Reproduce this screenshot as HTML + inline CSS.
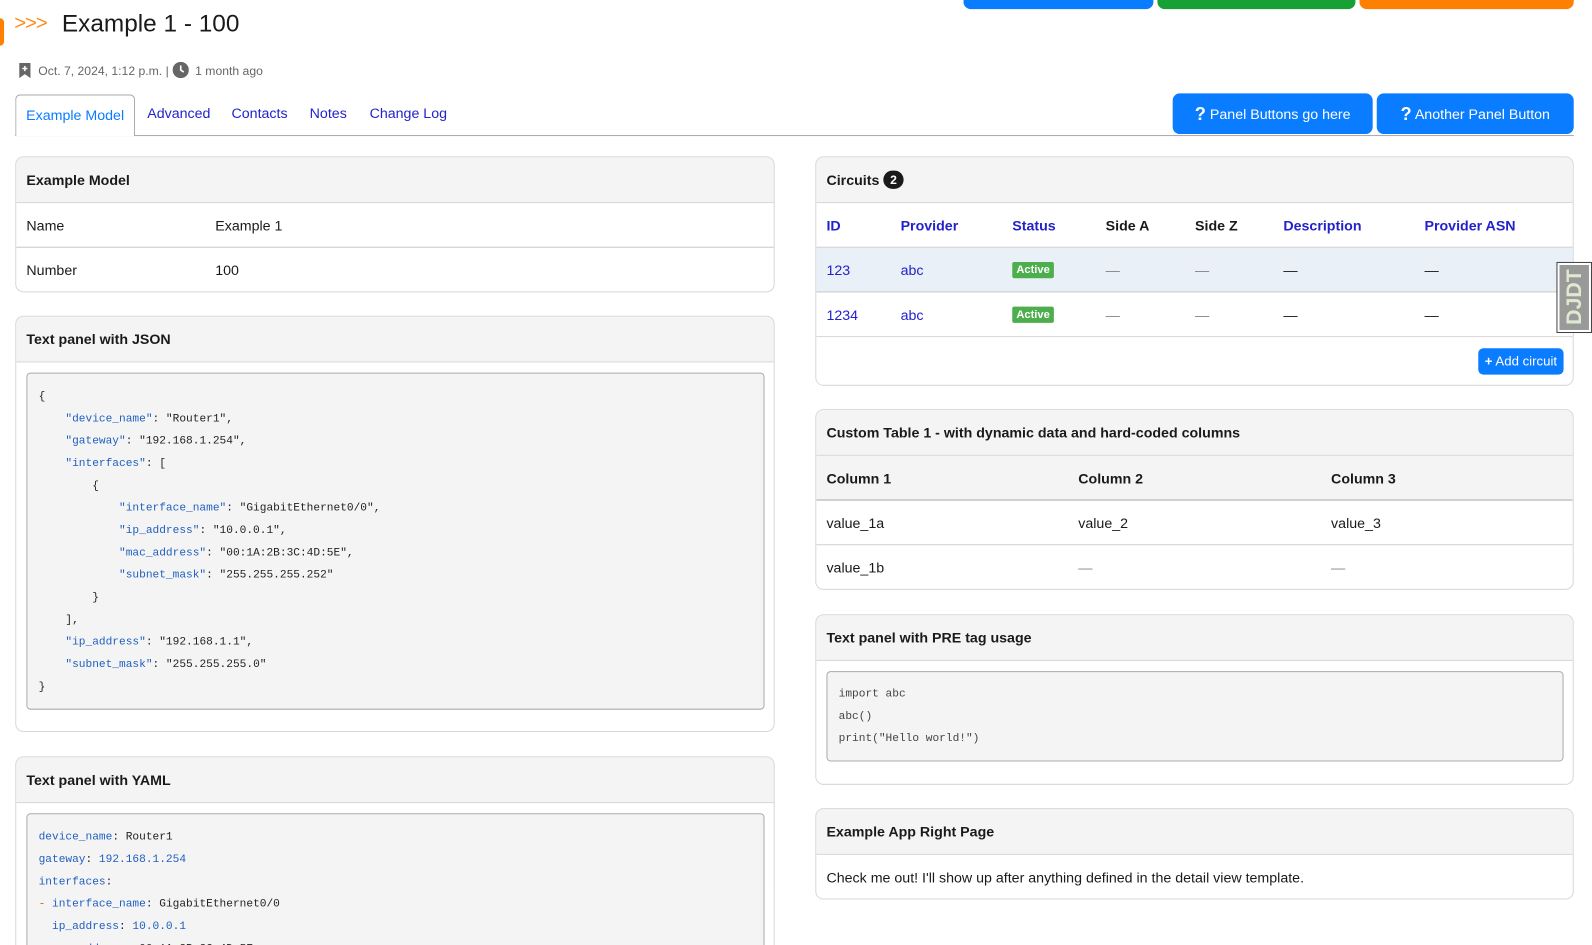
<!DOCTYPE html>
<html><head><meta charset="utf-8">
<style>
*{box-sizing:border-box;margin:0;padding:0}
html,body{width:1592px;height:945px;overflow:hidden;background:#fff}
body{font-family:"Liberation Sans",sans-serif;font-size:14px;color:#1a1a1a;position:relative}
#w{position:absolute;left:0;top:0;width:1568px;height:931px;transform:scale(1.0153);transform-origin:0 0;overflow:hidden}
.a{position:absolute}
.panel{position:absolute;border:1px solid #d8d8d8;border-radius:8px;background:#fff;overflow:hidden}
.ph{height:45px;background:#f4f4f4;border-bottom:1px solid #d8d8d8;padding:0 10px;line-height:44px;font-weight:bold;font-size:14px}
.row{position:absolute;left:0;right:0;height:44px;line-height:44px;border-bottom:1px solid #c8c8c8}
.row span{position:absolute}
.pre{position:absolute;background:#f4f4f4;border:1px solid #aaa;border-radius:4px;font-family:"Liberation Mono",monospace;font-size:11px;line-height:22px;padding:12px 11px;white-space:pre;color:#222}
.k{color:#1f5fbf}
.lnk{color:#2222cc}
.badge{position:absolute;top:14px;background:#4cae4c;color:#fff;font-size:11px;font-weight:bold;line-height:16px;padding:0 4px;border-radius:2px}
.btn{position:absolute;background:#0a7cff;color:#fff;border-radius:7px;text-align:center;font-size:14px}
</style></head><body><div id="w">
<div class="a" style="left:949px;top:0;width:187px;height:9px;background:#0a7cff;border-radius:0 0 7px 7px"></div>
<div class="a" style="left:1140px;top:0;width:195px;height:9px;background:#17a034;border-radius:0 0 7px 7px"></div>
<div class="a" style="left:1339px;top:0;width:211px;height:9px;background:#ff8000;border-radius:0 0 7px 7px"></div>
<div class="a" style="left:0;top:18px;width:4px;height:27px;background:#ff8000;border-radius:0 4px 4px 0"></div>

<div class="a" style="left:14px;top:12px;font-size:20px;color:#ff8c1a;letter-spacing:-1px">&gt;&gt;&gt;</div>
<div class="a" style="left:61px;top:10px;font-size:24px;color:#1a1a1a">Example 1 - 100</div>

<div class="a" style="left:18px;top:61px;font-size:12px;color:#666;line-height:16px">
<svg width="13" height="15" viewBox="0 0 13 15" style="vertical-align:-3px"><path d="M1 0h11v15l-5.5-4L1 15z" fill="#666"/><path d="M6.5 3v5M4 5.5h5" stroke="#fff" stroke-width="1.5"/></svg>
&nbsp;Oct. 7, 2024, 1:12 p.m. |
<svg width="16" height="16" viewBox="0 0 16 16" style="vertical-align:-3px"><circle cx="8" cy="8" r="8" fill="#666"/><path d="M8 3.5V8l3 2" stroke="#fff" stroke-width="1.6" fill="none"/></svg>
&nbsp;1 month ago</div>

<div class="a" style="left:15px;top:133px;width:1535px;height:1px;background:#aaa"></div>
<div class="a" style="left:15px;top:93px;width:118px;height:41px;border:1px solid #aaa;border-bottom:none;border-radius:5px 5px 0 0;background:#fff;color:#0a7cff;line-height:38px;text-align:center">Example Model</div>
<div class="a lnk" style="left:145px;top:103px">Advanced</div>
<div class="a lnk" style="left:228px;top:103px">Contacts</div>
<div class="a lnk" style="left:305px;top:103px">Notes</div>
<div class="a lnk" style="left:364px;top:103px">Change Log</div>
<div class="btn" style="left:1155px;top:92px;width:197px;height:40px;line-height:40px"><b style="font-size:18px;vertical-align:-1px">?</b> Panel Buttons go here</div>
<div class="btn" style="left:1356px;top:92px;width:194px;height:40px;line-height:40px"><b style="font-size:18px;vertical-align:-1px">?</b> Another Panel Button</div>

<div class="panel" style="left:15px;top:154px;width:748px;height:134px">
<div class="ph">Example Model</div>
<div class="row" style="top:45px"><span style="left:10px">Name</span><span style="left:196px">Example 1</span></div>
<div class="row" style="top:89px;border:none"><span style="left:10px">Number</span><span style="left:196px">100</span></div>
</div>

<div class="panel" style="left:15px;top:311px;width:748px;height:410px">
<div class="ph">Text panel with JSON</div>
<div class="pre" style="left:10px;top:55px;width:727px;height:332px">{
    <span class="k">"device_name"</span>: "Router1",
    <span class="k">"gateway"</span>: "192.168.1.254",
    <span class="k">"interfaces"</span>: [
        {
            <span class="k">"interface_name"</span>: "GigabitEthernet0/0",
            <span class="k">"ip_address"</span>: "10.0.0.1",
            <span class="k">"mac_address"</span>: "00:1A:2B:3C:4D:5E",
            <span class="k">"subnet_mask"</span>: "255.255.255.252"
        }
    ],
    <span class="k">"ip_address"</span>: "192.168.1.1",
    <span class="k">"subnet_mask"</span>: "255.255.255.0"
}</div>
</div>

<div class="panel" style="left:15px;top:745px;width:748px;height:260px">
<div class="ph">Text panel with YAML</div>
<div class="pre" style="left:10px;top:55px;width:727px;height:300px"><span class="k">device_name</span>: Router1
<span class="k">gateway</span>: <span class="k">192.168.1.254</span>
<span class="k">interfaces</span>:
<span style="color:#c60">-</span> <span class="k">interface_name</span>: GigabitEthernet0/0
  <span class="k">ip_address</span>: <span class="k">10.0.0.1</span>
  <span class="k">mac_address</span>: 00:1A:2B:3C:4D:5E</div>
</div>

<div class="panel" style="left:803px;top:154px;width:747px;height:226px">
<div class="ph">Circuits <span style="display:inline-block;background:#1a1a1a;color:#fff;border-radius:10px;width:20px;height:18px;line-height:18px;text-align:center;font-size:12px;vertical-align:1px">2</span></div>
<div class="row" style="top:45px;font-weight:bold"><span class="lnk" style="left:10px">ID</span><span class="lnk" style="left:83px">Provider</span><span class="lnk" style="left:193px">Status</span><span style="left:285px">Side A</span><span style="left:373px">Side Z</span><span class="lnk" style="left:460px">Description</span><span class="lnk" style="left:599px">Provider ASN</span></div>
<div class="row" style="top:89px;background:#e9f0f8"><span class="lnk" style="left:10px">123</span><span class="lnk" style="left:83px">abc</span><span class="badge" style="left:193px">Active</span><span style="left:285px;color:#888">—</span><span style="left:373px;color:#888">—</span><span style="left:460px">—</span><span style="left:599px">—</span></div>
<div class="row" style="top:133px;border-color:#d8d8d8"><span class="lnk" style="left:10px">1234</span><span class="lnk" style="left:83px">abc</span><span class="badge" style="left:193px">Active</span><span style="left:285px;color:#888">—</span><span style="left:373px;color:#888">—</span><span style="left:460px">—</span><span style="left:599px">—</span></div>
<div class="btn" style="left:652px;top:188px;width:84px;height:26px;line-height:26px;font-size:13px;border-radius:5px"><b>+</b> Add circuit</div>
</div>
<div class="a" style="left:1533px;top:258px;width:35px;height:70px;border:1px solid #444;background:#fff;padding:2px">
<div style="width:100%;height:100%;background:#999;color:#dfe9cf;font-weight:bold;font-size:21px;writing-mode:vertical-rl;transform:rotate(180deg);text-align:center;line-height:29px">DJDT</div></div>

<div class="panel" style="left:803px;top:403px;width:747px;height:178px">
<div class="ph">Custom Table 1 - with dynamic data and hard-coded columns</div>
<div class="row" style="top:45px;font-weight:bold;background:#f4f4f4;border-color:#aaa"><span style="left:10px">Column 1</span><span style="left:258px">Column 2</span><span style="left:507px">Column 3</span></div>
<div class="row" style="top:89px;border-color:#d0d0d0"><span style="left:10px">value_1a</span><span style="left:258px">value_2</span><span style="left:507px">value_3</span></div>
<div class="row" style="top:133px;border:none"><span style="left:10px">value_1b</span><span style="left:258px;color:#888">—</span><span style="left:507px;color:#888">—</span></div>
</div>

<div class="panel" style="left:803px;top:605px;width:747px;height:168px">
<div class="ph">Text panel with PRE tag usage</div>
<div class="pre" style="left:10px;top:55px;width:726px;height:89px;color:#444;padding-top:11px">import abc
abc()
print("Hello world!")</div>
</div>

<div class="panel" style="left:803px;top:796px;width:747px;height:90px">
<div class="ph">Example App Right Page</div>
<div style="padding:0 10px;line-height:44px">Check me out! I'll show up after anything defined in the detail view template.</div>
</div>
</div></body></html>
